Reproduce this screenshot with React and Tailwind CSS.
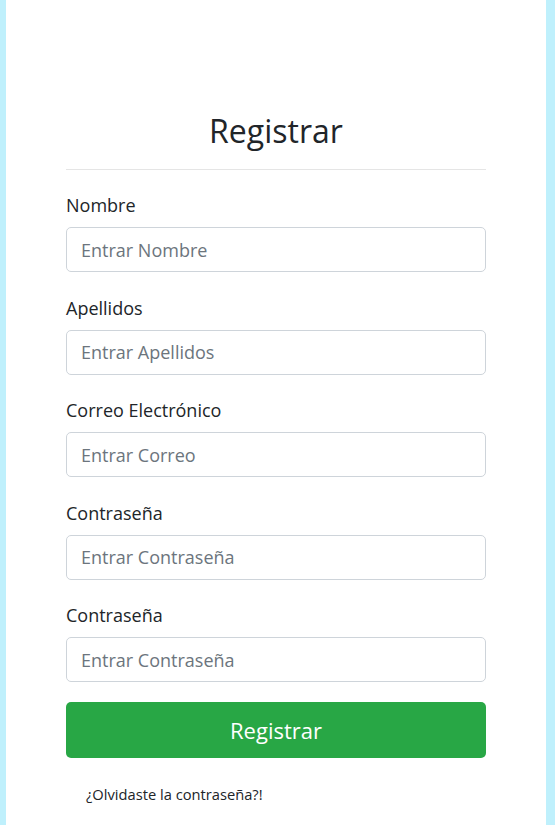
const fields = [
  { label: 'Nombre', placeholder: 'Entrar Nombre', type: 'text' },
  { label: 'Apellidos', placeholder: 'Entrar Apellidos', type: 'text' },
  { label: 'Correo Electrónico', placeholder: 'Entrar Correo', type: 'email' },
  { label: 'Contraseña', placeholder: 'Entrar Contraseña', type: 'password' },
  { label: 'Contraseña', placeholder: 'Entrar Contraseña', type: 'password' },
]

export default function App() {
  return (
    <div className="min-h-[825px] bg-[#bff0fc] pl-[6px] pr-[9px] font-['Open_Sans',sans-serif] text-[#212529]">
      <div className="min-h-[825px] bg-white px-[60px] pt-[111px]">
        <h1 className="text-center text-[32px] leading-[40px] font-normal">Registrar</h1>
        <hr className="mt-[18px] border-t border-[#e5e5e5]" />
        <form className="mt-[22px]" onSubmit={(e) => e.preventDefault()}>
          {fields.map((f, i) => (
            <div key={i} className={i === fields.length - 1 ? 'mb-[20px]' : 'mb-[22.5px]'}>
              <label className="block text-[18px] leading-[27px] mb-2">{f.label}</label>
              <input
                type="text"
                placeholder={f.placeholder}
                className="block w-full h-[45px] rounded-[5px] border border-[#ced4da] px-[14px] text-[18px] placeholder:text-[#6c757d] outline-none"
              />
            </div>
          ))}
          <button
            type="submit"
            className="block w-full h-[56px] rounded-[5px] bg-[#28a745] text-white text-[22px]"
          >
            Registrar
          </button>
        </form>
        <p className="mt-[25px] pl-[20px] text-[14.7px] leading-[22px] text-[#212529]">¿Olvidaste la contraseña?!</p>
      </div>
    </div>
  )
}
